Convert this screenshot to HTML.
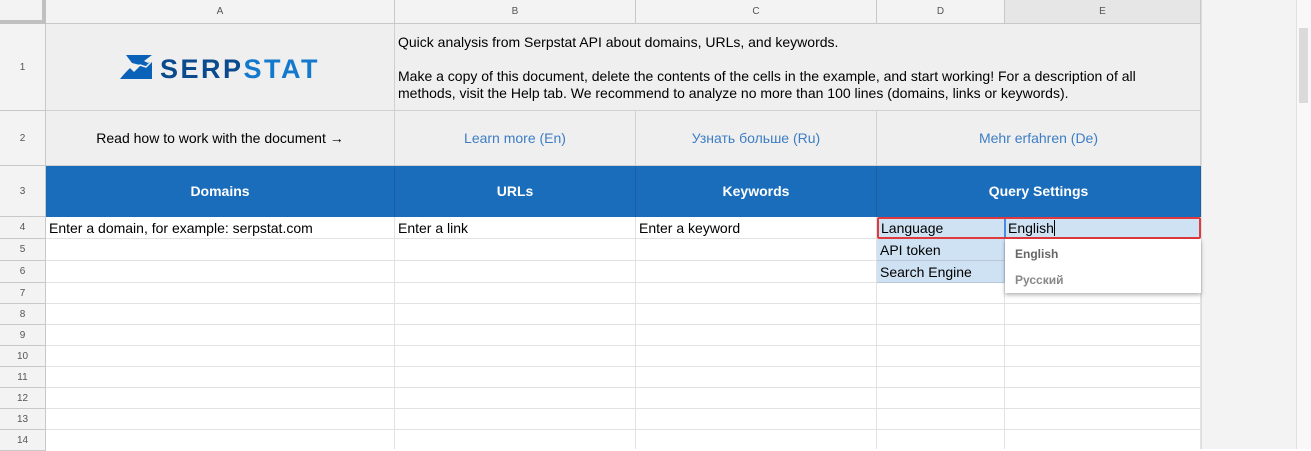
<!DOCTYPE html>
<html><head><style>
*{margin:0;padding:0;box-sizing:border-box}
body{width:1311px;height:449px;overflow:hidden;background:#fff;font-family:"Liberation Sans",Arial,sans-serif;position:relative}
div{position:absolute}
.hd{background:#f3f3f3;color:#555;font-size:10px;text-align:center;border-right:1px solid #c8c8c8;border-bottom:1px solid #c8c8c8}
.c{border-right:1px solid #e2e2e2;border-bottom:1px solid #e2e2e2;font-size:14px;color:#000;white-space:nowrap;overflow:visible}
.g{background:#efefef;border-color:#d0d0d0}
.b{background:#1a6dbb;color:#fff;font-weight:bold;text-align:center;line-height:50px;border-right:1px solid #1a5fa5;border-bottom:none}
.lnk{color:#3d7dc4;text-align:center;line-height:54px}
</style></head><body>
<div class="hd" style="left:0;top:0;width:46px;height:24px;border-right:4px solid #c0c0c0;border-bottom:4px solid #c0c0c0"></div>
<div class="hd" style="left:46px;top:0;width:349px;height:24px;line-height:23px">A</div>
<div class="hd" style="left:395px;top:0;width:241px;height:24px;line-height:23px">B</div>
<div class="hd" style="left:636px;top:0;width:241px;height:24px;line-height:23px">C</div>
<div class="hd" style="left:877px;top:0;width:128px;height:24px;line-height:23px">D</div>
<div class="hd" style="left:1005px;top:0;width:196px;height:24px;line-height:23px;background:#e6e6e6">E</div>
<div style="left:1201px;top:0;width:110px;height:449px;background:#f3f3f3;border-left:1px solid #ddd"></div>
<div style="left:1296px;top:0;width:15px;height:449px;background:#f8f8f8;border-left:1px solid #e0e0e0"></div>
<div style="left:1299px;top:28px;width:9px;height:75px;background:#dadada"></div>
<div class="hd" style="left:0;top:24px;width:46px;height:87px;line-height:87px">1</div>
<div class="hd" style="left:0;top:111px;width:46px;height:55px;line-height:55px">2</div>
<div class="hd" style="left:0;top:166px;width:46px;height:51px;line-height:51px">3</div>
<div class="hd" style="left:0;top:217px;width:46px;height:22px;line-height:22px">4</div>
<div class="hd" style="left:0;top:239px;width:46px;height:22px;line-height:22px">5</div>
<div class="hd" style="left:0;top:261px;width:46px;height:22px;line-height:22px">6</div>
<div class="hd" style="left:0;top:283px;width:46px;height:21px;line-height:21px">7</div>
<div class="hd" style="left:0;top:304px;width:46px;height:21px;line-height:21px">8</div>
<div class="hd" style="left:0;top:325px;width:46px;height:21px;line-height:21px">9</div>
<div class="hd" style="left:0;top:346px;width:46px;height:21px;line-height:21px">10</div>
<div class="hd" style="left:0;top:367px;width:46px;height:21px;line-height:21px">11</div>
<div class="hd" style="left:0;top:388px;width:46px;height:21px;line-height:21px">12</div>
<div class="hd" style="left:0;top:409px;width:46px;height:21px;line-height:21px">13</div>
<div class="hd" style="left:0;top:430px;width:46px;height:21px;line-height:21px">14</div>
<div class="c g" style="left:46px;top:24px;width:349px;height:87px"></div>
<svg style="position:absolute;left:120px;top:55px" width="202" height="25" viewBox="0 0 202 25">
<path d="M6 0H32L24 6 28 8 32 6V24H0L10 12 14 16 20 10 12 8Z" fill="#0a62b8"/>
<path d="M2 20L10 12 14 16 20 10 26 12 32 6" stroke="#f0f0f0" stroke-width="1.5" fill="none"/>
<text x="40" y="23" font-family="Liberation Sans,Arial,sans-serif" font-weight="bold" font-size="27" letter-spacing="2.5" fill="#0b4a8c">SERP<tspan fill="#1478cc">STAT</tspan></text>
</svg>
<div class="c g" style="left:395px;top:24px;width:806px;height:87px;padding:10px 3px;font-size:14px;white-space:normal;line-height:17px">Quick analysis from Serpstat API about domains, URLs, and keywords.<br><br>Make a copy of this document, delete the contents of the cells in the example, and start working! For a description of all methods, visit the Help tab. We recommend to analyze no more than 100 lines (domains, links or keywords).</div>
<div class="c g" style="left:46px;top:111px;width:349px;height:55px;text-align:center;line-height:54px">Read how to work with the document →</div>
<div class="c g lnk" style="left:395px;top:111px;width:241px;height:55px">Learn more (En)</div>
<div class="c g lnk" style="left:636px;top:111px;width:241px;height:55px">Узнать больше (Ru)</div>
<div class="c g lnk" style="left:877px;top:111px;width:324px;height:55px">Mehr erfahren (De)</div>
<div class="c b" style="left:46px;top:166px;width:349px;height:51px">Domains</div>
<div class="c b" style="left:395px;top:166px;width:241px;height:51px">URLs</div>
<div class="c b" style="left:636px;top:166px;width:241px;height:51px">Keywords</div>
<div class="c b" style="left:877px;top:166px;width:324px;height:51px">Query Settings</div>
<div class="c" style="left:46px;top:217px;width:349px;height:22px;padding:3px">Enter a domain, for example: serpstat.com</div>
<div class="c" style="left:395px;top:217px;width:241px;height:22px;padding:3px">Enter a link</div>
<div class="c" style="left:636px;top:217px;width:241px;height:22px;padding:3px">Enter a keyword</div>
<div style="left:46px;top:239px;width:1155px;height:44px;background:repeating-linear-gradient(#fff 0 21px,#e2e2e2 21px 22px)"></div>
<div style="left:46px;top:283px;width:1155px;height:166px;background:repeating-linear-gradient(#fff 0 20px,#e2e2e2 20px 21px)"></div>
<div style="left:394px;top:239px;width:1px;height:210px;background:#e2e2e2"></div>
<div style="left:635px;top:239px;width:1px;height:210px;background:#e2e2e2"></div>
<div style="left:876px;top:239px;width:1px;height:210px;background:#e2e2e2"></div>
<div style="left:1004px;top:239px;width:1px;height:210px;background:#e2e2e2"></div>
<div style="left:1200px;top:239px;width:1px;height:210px;background:#e2e2e2"></div>
<div class="c" style="left:877px;top:239px;width:128px;height:22px;background:#cfe2f3;padding:3px;border-color:#b8c8d8">API token</div>
<div class="c" style="left:877px;top:261px;width:128px;height:22px;background:#cfe2f3;padding:3px;border-color:#b8c8d8">Search Engine</div>
<div class="c" style="left:877px;top:217px;width:324px;height:22px;background:#cfe2f3;border:2px solid #e0393e;border-radius:2px"></div>
<div style="left:881px;top:220px;font-size:14px">Language</div>
<div style="left:1004px;top:219px;width:2px;height:18px;background:#4a8ae0"></div>
<div style="left:1008px;top:220px;font-size:14px">English<span style="border-right:1px solid #000"></span></div>
<div style="left:1005px;top:239px;width:196px;height:54px;background:#fff;box-shadow:0 2px 4px rgba(0,0,0,.3);font-size:12px;font-weight:bold;color:#666">
<div style="left:10px;top:8px">English</div>
<div style="left:10px;top:34px;color:#888">Русский</div>
</div>
</body></html>
